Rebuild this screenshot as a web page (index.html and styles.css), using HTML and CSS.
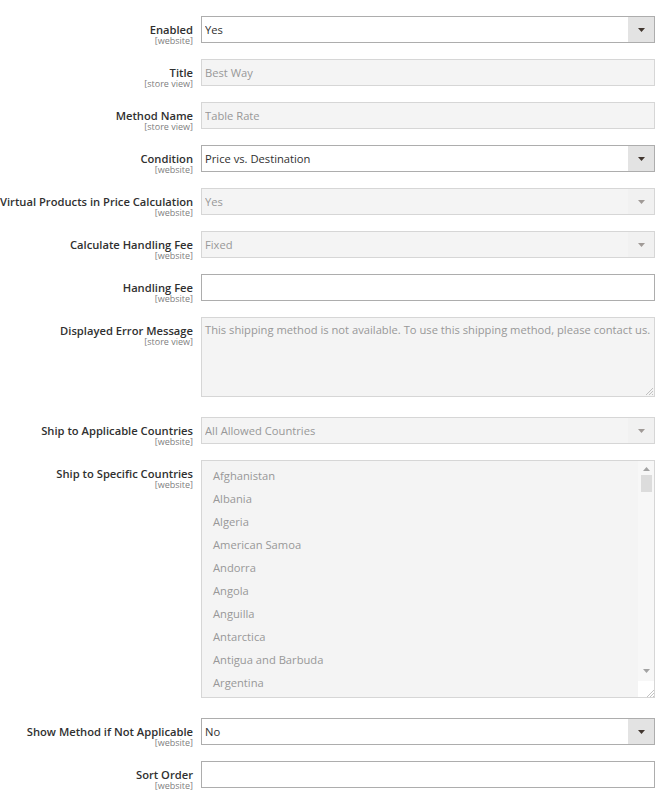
FILE: index.html
```html
<!DOCTYPE html>
<html lang="en">
<head>
<meta charset="utf-8">
<title>Table Rates</title>
<link rel="stylesheet" href="styles.css">
</head>
<body>
<div class="form">
  <div class="row">
    <div class="label"><span class="label-text">Enabled</span><span class="scope">[website]</span></div>
    <div class="control select"><span class="value">Yes</span><span class="arrow"><svg width="7" height="4" viewBox="0 0 7 4"><polygon points="0,0 7,0 3.5,4"/></svg></span></div>
  </div>
  <div class="row">
    <div class="label"><span class="label-text">Title</span><span class="scope">[store view]</span></div>
    <div class="control disabled"><span class="value">Best Way</span></div>
  </div>
  <div class="row">
    <div class="label"><span class="label-text">Method Name</span><span class="scope">[store view]</span></div>
    <div class="control disabled"><span class="value">Table Rate</span></div>
  </div>
  <div class="row">
    <div class="label"><span class="label-text">Condition</span><span class="scope">[website]</span></div>
    <div class="control select"><span class="value">Price vs. Destination</span><span class="arrow"><svg width="7" height="4" viewBox="0 0 7 4"><polygon points="0,0 7,0 3.5,4"/></svg></span></div>
  </div>
  <div class="row">
    <div class="label"><span class="label-text">Virtual Products in Price Calculation</span><span class="scope">[website]</span></div>
    <div class="control select disabled"><span class="value">Yes</span><span class="arrow"><svg width="7" height="4" viewBox="0 0 7 4"><polygon points="0,0 7,0 3.5,4"/></svg></span></div>
  </div>
  <div class="row">
    <div class="label"><span class="label-text">Calculate Handling Fee</span><span class="scope">[website]</span></div>
    <div class="control select disabled"><span class="value">Fixed</span><span class="arrow"><svg width="7" height="4" viewBox="0 0 7 4"><polygon points="0,0 7,0 3.5,4"/></svg></span></div>
  </div>
  <div class="row">
    <div class="label"><span class="label-text">Handling Fee</span><span class="scope">[website]</span></div>
    <div class="control"></div>
  </div>
  <div class="row gap-lg">
    <div class="label"><span class="label-text">Displayed Error Message</span><span class="scope">[store view]</span></div>
    <div class="textarea disabled">
      <span class="ta-text">This shipping method is not available. To use this shipping method, please contact us.</span>
      <svg class="grip" width="8" height="8" viewBox="0 0 8 8"><path d="M8 1 L1 8 M8 4 L4 8 M8 7 L7 8" stroke="#b4b4b4" stroke-width="0.8"/></svg>
    </div>
  </div>
  <div class="row">
    <div class="label"><span class="label-text">Ship to Applicable Countries</span><span class="scope">[website]</span></div>
    <div class="control select disabled"><span class="value">All Allowed Countries</span><span class="arrow"><svg width="7" height="4" viewBox="0 0 7 4"><polygon points="0,0 7,0 3.5,4"/></svg></span></div>
  </div>
  <div class="row gap-lg">
    <div class="label"><span class="label-text">Ship to Specific Countries</span><span class="scope">[website]</span></div>
    <div class="multiselect disabled">
      <ul class="options">
        <li>Afghanistan</li>
        <li>Albania</li>
        <li>Algeria</li>
        <li>American Samoa</li>
        <li>Andorra</li>
        <li>Angola</li>
        <li>Anguilla</li>
        <li>Antarctica</li>
        <li>Antigua and Barbuda</li>
        <li>Argentina</li>
      </ul>
      <div class="scrollbar">
        <svg class="sb-up" width="7" height="4" viewBox="0 0 7 4"><polygon points="0,4 7,4 3.5,0"/></svg>
        <div class="sb-thumb"></div>
        <div class="sb-fill"></div>
        <svg class="sb-down" width="7" height="4" viewBox="0 0 7 4"><polygon points="0,0 7,0 3.5,4"/></svg>
        <div class="sb-corner"><svg width="8" height="8" viewBox="0 0 8 8"><path d="M8 1 L1 8 M8 4 L4 8 M8 7 L7 8" stroke="#b4b4b4" stroke-width="0.8"/></svg></div>
      </div>
    </div>
  </div>
  <div class="row">
    <div class="label"><span class="label-text">Show Method if Not Applicable</span><span class="scope">[website]</span></div>
    <div class="control select"><span class="value">No</span><span class="arrow"><svg width="7" height="4" viewBox="0 0 7 4"><polygon points="0,0 7,0 3.5,4"/></svg></span></div>
  </div>
  <div class="row">
    <div class="label"><span class="label-text">Sort Order</span><span class="scope">[website]</span></div>
    <div class="control"></div>
  </div>
</div>
</body>
</html>
```

FILE: styles.css
```css
html, body {
  margin: 0;
  padding: 0;
  background: #ffffff;
  font-family: "Open Sans", "Noto Sans", sans-serif;
}

.form {
  padding-top: 16px;
}

.row {
  display: grid;
  grid-template-columns: 193px 454px;
  column-gap: 8px;
  margin-bottom: 16px;
  align-items: start;
}

.row.gap-lg {
  margin-bottom: 20px;
}

.label {
  box-sizing: border-box;
  height: 27px;
  text-align: right;
  padding-top: 8px;
  direction: rtl;
}

.label-text {
  display: block;
  direction: ltr;
  unicode-bidi: isolate;
  font-size: 11.2px;
  font-weight: 600;
  line-height: 12px;
  color: #303030;
  white-space: nowrap;
}

.scope {
  display: block;
  direction: ltr;
  unicode-bidi: isolate;
  font-size: 9px;
  line-height: 9px;
  color: #808080;
  white-space: nowrap;
}

.control {
  box-sizing: border-box;
  height: 27px;
  border: 1px solid #adadad;
  background: #ffffff;
  display: flex;
  align-items: center;
  font-size: 11.2px;
  color: #303030;
  padding-left: 3px;
}

.control .value {
  flex: 1;
  white-space: nowrap;
  overflow: hidden;
}

.select {
  padding-right: 0;
}

.arrow {
  width: 26px;
  align-self: stretch;
  background: #e3e3e3;
  display: flex;
  align-items: center;
  justify-content: center;
}

.arrow svg {
  fill: #41362f;
}

.disabled {
  background: #f4f4f4;
  border: 1px solid #d6d6d6;
  color: #989898;
}

.disabled .arrow {
  background: #f1f1f1;
}

.disabled .arrow svg {
  fill: #a09a97;
}

.textarea {
  box-sizing: border-box;
  height: 80px;
  position: relative;
  font-size: 11.2px;
  line-height: 15px;
  padding: 4px 3px;
  white-space: nowrap;
  overflow: hidden;
}

.grip {
  position: absolute;
  right: 1px;
  bottom: 1px;
}

.multiselect {
  box-sizing: border-box;
  height: 238px;
  position: relative;
  display: flex;
  overflow: hidden;
  font-size: 11.2px;
}

.options {
  list-style: none;
  margin: 0;
  padding: 3px 0 0 11px;
  flex: 1;
}

.options li {
  line-height: 23px;
  height: 23px;
  white-space: nowrap;
}

.scrollbar {
  width: 16px;
  background: #f7f7f7;
  display: flex;
  flex-direction: column;
  align-items: center;
}

.scrollbar svg {
  fill: #a3a3a3;
}

.sb-up {
  margin-top: 6px;
}

.sb-thumb {
  width: 11px;
  height: 17px;
  margin-top: 4px;
  background: #dcdcdc;
}

.sb-fill {
  flex: 1;
}

.sb-down {
  margin-bottom: 8px;
}

.sb-corner {
  width: 16px;
  height: 16px;
  background: #ffffff;
  display: flex;
  align-items: flex-end;
  justify-content: flex-end;
}
```
